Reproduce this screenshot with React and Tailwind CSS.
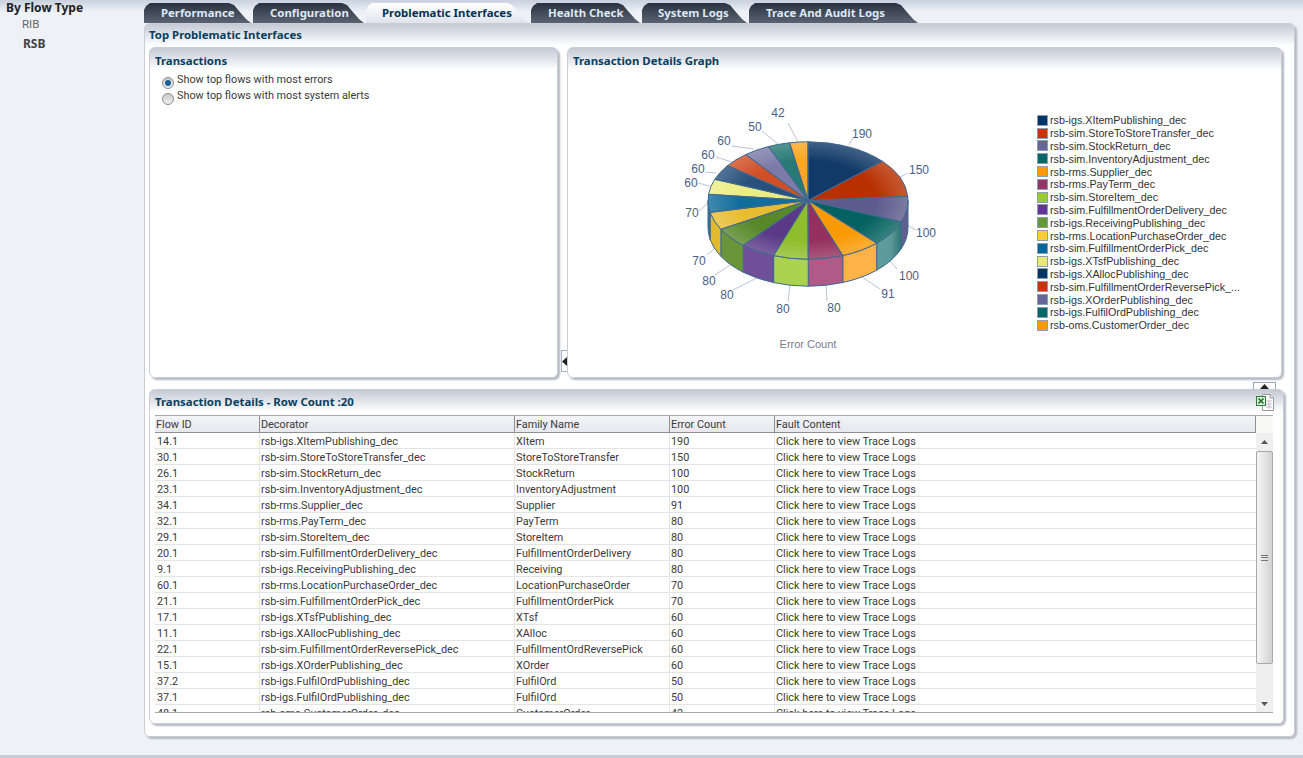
import React from 'react';

const tabs = [
    { label: 'Performance', w: 'w-[109px]', pl: 'pl-[17px]' },
    { label: 'Configuration', w: 'w-[113px]', pl: 'pl-[17px]' },
    { label: 'Problematic Interfaces', w: 'w-[165px]', pl: 'pl-[16px]', active: true },
    { label: 'Health Check', w: 'w-[111px]', pl: 'pl-[17px]' },
    { label: 'System Logs', w: 'w-[107px]', pl: 'pl-[16px]' },
    { label: 'Trace And Audit Logs', w: 'w-[171px]', pl: 'pl-[17px]' },
];

const rows = [
    ['14.1', 'rsb-igs.XItemPublishing_dec', 'XItem', '190'],
    ['30.1', 'rsb-sim.StoreToStoreTransfer_dec', 'StoreToStoreTransfer', '150'],
    ['26.1', 'rsb-sim.StockReturn_dec', 'StockReturn', '100'],
    ['23.1', 'rsb-sim.InventoryAdjustment_dec', 'InventoryAdjustment', '100'],
    ['34.1', 'rsb-rms.Supplier_dec', 'Supplier', '91'],
    ['32.1', 'rsb-rms.PayTerm_dec', 'PayTerm', '80'],
    ['29.1', 'rsb-sim.StoreItem_dec', 'StoreItem', '80'],
    ['20.1', 'rsb-sim.FulfillmentOrderDelivery_dec', 'FulfillmentOrderDelivery', '80'],
    ['9.1', 'rsb-igs.ReceivingPublishing_dec', 'Receiving', '80'],
    ['60.1', 'rsb-rms.LocationPurchaseOrder_dec', 'LocationPurchaseOrder', '70'],
    ['21.1', 'rsb-sim.FulfillmentOrderPick_dec', 'FulfillmentOrderPick', '70'],
    ['17.1', 'rsb-igs.XTsfPublishing_dec', 'XTsf', '60'],
    ['11.1', 'rsb-igs.XAllocPublishing_dec', 'XAlloc', '60'],
    ['22.1', 'rsb-sim.FulfillmentOrderReversePick_dec', 'FulfillmentOrdReversePick', '60'],
    ['15.1', 'rsb-igs.XOrderPublishing_dec', 'XOrder', '60'],
    ['37.2', 'rsb-igs.FulfilOrdPublishing_dec', 'FulfilOrd', '50'],
    ['37.1', 'rsb-igs.FulfilOrdPublishing_dec', 'FulfilOrd', '50'],
    ['48.1', 'rsb-oms.CustomerOrder_dec', 'CustomerOrder', '42'],
];

const slices = [
    { name: 'rsb-igs.XItemPublishing_dec', value: 190, color: '#123a68', side: '#2f5580', swatch: 'bg-[#003366]' },
    { name: 'rsb-sim.StoreToStoreTransfer_dec', value: 150, color: '#b83000', side: '#c8502a', swatch: 'bg-[#cc3300]' },
    { name: 'rsb-sim.StockReturn_dec', value: 100, color: '#5c5b8c', side: '#625f8f', swatch: 'bg-[#666699]' },
    { name: 'rsb-sim.InventoryAdjustment_dec', value: 100, color: '#03625f', side: 'url(#tealSide)', swatch: 'bg-[#006666]' },
    { name: 'rsb-rms.Supplier_dec', value: 91, color: '#fa9a04', side: '#ffb347', swatch: 'bg-[#ff9900]' },
    { name: 'rsb-rms.PayTerm_dec', value: 80, color: '#93305f', side: '#b05a88', swatch: 'bg-[#993366]' },
    { name: 'rsb-sim.StoreItem_dec', value: 80, color: '#8fbe2c', side: '#abd350', swatch: 'bg-[#99cc33]' },
    { name: 'rsb-sim.FulfillmentOrderDelivery_dec', value: 80, color: '#5a3a88', side: '#6f5098', swatch: 'bg-[#663399]' },
    { name: 'rsb-igs.ReceivingPublishing_dec', value: 80, color: '#588828', side: '#6a9538', swatch: 'bg-[#669933]' },
    { name: 'rsb-rms.LocationPurchaseOrder_dec', value: 70, color: '#e8bc30', side: '#e2b92c', swatch: 'bg-[#ffcc33]' },
    { name: 'rsb-sim.FulfillmentOrderPick_dec', value: 70, color: '#126c9c', side: '#2a6f98', swatch: 'bg-[#006699]' },
    { name: 'rsb-igs.XTsfPublishing_dec', value: 60, color: '#ecec84', side: '#ecec88', swatch: 'bg-[#e8e878]' },
    { name: 'rsb-igs.XAllocPublishing_dec', value: 60, color: '#28507c', side: '#2f5580', swatch: 'bg-[#003366]' },
    { name: 'rsb-sim.FulfillmentOrderReversePick_...', value: 60, color: '#d04f26', side: '#c8502a', swatch: 'bg-[#cc3300]' },
    { name: 'rsb-igs.XOrderPublishing_dec', value: 60, color: '#7c7ba8', side: '#625f8f', swatch: 'bg-[#666699]' },
    { name: 'rsb-igs.FulfilOrdPublishing_dec', value: 50, color: '#287a76', side: '#5a9a98', swatch: 'bg-[#006666]' },
    { name: 'rsb-oms.CustomerOrder_dec', value: 42, color: '#ffa622', side: '#ffb347', swatch: 'bg-[#ff9900]' },
];

// label text and leader line, in page coordinates
const labels = [
    ['190', 862, 135, 849, 146, 853, 139],
    ['150', 919, 171, 900, 178, 908, 174],
    ['100', 926, 234, 907, 226, 916, 231],
    ['100', 909, 277, 890, 262, 897, 270],
    ['91', 888, 295, 862, 278, 880, 290],
    ['80', 834, 309, 826, 286, 827, 302],
    ['80', 783, 310, 790, 286, 788, 303],
    ['80', 727, 296, 757, 279, 733, 291],
    ['80', 709, 282, 730, 266, 715, 276],
    ['70', 699, 262, 716, 248, 707, 256],
    ['70', 692, 214, 707, 205, 699, 212],
    ['60', 691, 184, 710, 187, 698, 184],
    ['60', 698, 170, 716, 174, 705, 173],
    ['60', 708, 156, 738, 165, 716, 158],
    ['60', 724, 142, 754, 150, 732, 147],
    ['50', 755, 128, 778, 145, 762, 132],
    ['42', 778, 114, 798, 143, 788, 124],
];

const cx = 808;
const cy = 201.5;
const rx = 100;
const ry = 58.7;
const depth = 27;

function pt(t, dy = 0) {
    const a = (t * Math.PI) / 180;
    return [cx + rx * Math.sin(a), cy - ry * Math.cos(a) + dy];
}

function PieChart() {
    const total = slices.reduce((s, x) => s + x.value, 0);
    let start = 0;
    const parts = slices.map((s) => {
        const end = start + (s.value / total) * 360;
        const p = { ...s, start, end };
        start = end;
        return p;
    });
    const wedge = (p) => {
        const [x1, y1] = pt(p.start);
        const [x2, y2] = pt(p.end);
        const large = p.end - p.start > 180 ? 1 : 0;
        return `M${cx} ${cy}L${x1} ${y1}A${rx} ${ry} 0 ${large} 1 ${x2} ${y2}Z`;
    };

    return (
        <svg width="290" height="265" viewBox="670 95 290 265" className="shrink-0">
            <defs>
                <radialGradient id="rim" gradientUnits="userSpaceOnUse" cx="0" cy="0" r="1" gradientTransform={`translate(${cx} ${cy}) scale(${rx} ${ry})`}>
                    <stop offset="0.68" stopColor="#fff" stopOpacity="0" />
                    <stop offset="1" stopColor="#fff" stopOpacity="0.2" />
                </radialGradient>
                <linearGradient id="tealSide" gradientUnits="userSpaceOnUse" x1="876" y1="0" x2="901" y2="0">
                    <stop offset="0" stopColor="#5f9e9b" />
                    <stop offset="0.6" stopColor="#5a9a98" />
                    <stop offset="1" stopColor="#2c7674" />
                </linearGradient>
            </defs>
            {labels.map(([text, x, y, x1, y1, x2, y2], i) => (
                <line key={i} x1={x1} y1={y1} x2={x2} y2={y2} stroke="#b9c4d6" strokeWidth="1" />
            ))}
            {parts.filter((p) => p.end > 90 && p.start < 270).map((p) => {
                const a = Math.max(p.start, 90);
                const b = Math.min(p.end, 270);
                const [x1, y1] = pt(a);
                const [x2, y2] = pt(b);
                return (
                    <path
                        key={p.name}
                        d={`M${x1} ${y1}A${rx} ${ry} 0 0 1 ${x2} ${y2}L${x2} ${y2 + depth}A${rx} ${ry} 0 0 0 ${x1} ${y1 + depth}Z`}
                        fill={p.side}
                        stroke="#3f6890"
                        strokeWidth="1"
                    />
                );
            })}
            {parts.map((p) => (
                <path key={p.name} d={wedge(p)} fill={p.color} />
            ))}
            <ellipse cx={cx} cy={cy} rx={rx} ry={ry} fill="url(#rim)" />
            {parts.map((p) => (
                <path key={p.name} d={wedge(p)} fill="none" stroke="#3f6890" strokeWidth="1" />
            ))}
            {labels.map(([text, x, y], i) => (
                <text key={i} x={x} y={y + 4} textAnchor="middle" fontFamily="'Liberation Sans', sans-serif" fontSize="12" fill="#4a6088">
                    {text}
                </text>
            ))}
            <text x="808" y="349" textAnchor="middle" fontFamily="'Liberation Sans', sans-serif" fontSize="11" fill="#7d7d8c">
                Error Count
            </text>
        </svg>
    );
}

function Radio({ checked, label }) {
    return (
        <div className="flex h-4 items-center">
            <span className="mt-[5px] flex h-3 w-3 shrink-0 items-center justify-center rounded-full border border-[#8d8d8d] bg-[linear-gradient(#c9c9c9,#f0f0f0)]">
                {checked && <span className="h-[6px] w-[6px] rounded-full bg-[#1f5f96]" />}
            </span>
            <span className="ml-[3px]">{label}</span>
        </div>
    );
}

function ExcelIcon() {
    return (
        <svg width="19" height="19" viewBox="0 0 19 19">
            <path d="M6.5 1.5H14L17.5 5V17.5H6.5Z" fill="#fff" stroke="#9a9a9a" />
            <path d="M14 1.5V5H17.5" fill="#e8e8e8" stroke="#9a9a9a" />
            <path d="M10 8H16M10 11H16M10 14H16M13 8V16" stroke="#c8b8c8" />
            <rect x="0.5" y="3.5" width="9" height="9" fill="#dcefd8" stroke="#2f7d3c" />
            <path d="M2.5 5.5L7.5 10.5M7.5 5.5L2.5 10.5" stroke="#1e6b2c" strokeWidth="1.6" />
        </svg>
    );
}

function Tri({ down, className, fill = '#222' }) {
    return (
        <svg viewBox="0 0 9 5" className={className}>
            <path d={down ? 'M0 0H9L4.5 5Z' : 'M0 5H9L4.5 0Z'} fill={fill} />
        </svg>
    );
}

const panel = 'rounded-[6px] border border-[#c9cdd6] bg-[linear-gradient(#c4c9d5,#ffffff_22px)] shadow-[2px_2px_2px_#b4b8c2]';
const heading = "font-['Noto_Sans',sans-serif] font-bold text-[11.4px] text-[#07405f]";

export default function App() {
    return (
        <div className="flex h-[758px] w-[1303px] overflow-hidden border-b-[3px] border-[#c8ccd6] bg-[linear-gradient(#c9d1df,#eef2f7_12px)] font-['Roboto',sans-serif] text-[10.85px] text-[#3a3a3a]">
            <aside className="w-[144px] shrink-0 pl-[6px] pt-px">
                <div className="h-[14px] font-['Noto_Sans',sans-serif] text-[12px] leading-[14px] font-bold text-[#222]">By Flow Type</div>
                <div className="mt-[1px] h-[16px] pl-[16px] text-[11.5px] leading-[16px] text-[#666]">RIB</div>
                <div className="mt-[4px] pl-[17px] font-['Noto_Sans',sans-serif] text-[12px] leading-[16px] font-bold text-[#444]">RSB</div>
            </aside>

            <main className="w-[1151px] shrink-0 pt-[3px]">
                <div className="flex h-[20px]">
                    {tabs.map((t) => (
                        <div
                            key={t.label}
                            className={`flex shrink-0 items-center ${t.w} ${t.pl} font-['Noto_Sans',sans-serif] text-[11.4px] font-bold [clip-path:polygon(0_100%,0_7px,2px_3px,6px_0,calc(100%-24px)_0,calc(100%-19px)_2px,calc(100%-14px)_8px,calc(100%-7px)_16px,calc(100%-2px)_20px,calc(100%-4px)_100%)] ${t.active ? 'bg-[linear-gradient(#ffffff,#f2f4f8_45%,#dfe3ec)] text-[#06324f]' : 'bg-[linear-gradient(#2a3340,#5a6372)] text-[#dfe9f5]'}`}
                        >
                            {t.label}
                        </div>
                    ))}
                </div>

                <div className={`${panel} h-[714px] px-[4px]`}>
                    <div className={`${heading} flex h-[23px] items-center pb-px`}>Top Problematic Interfaces</div>

                    <div className="flex h-[331px]">
                        <section className={`${panel} w-[409px] px-[5px]`}>
                            <div className={`${heading} flex h-[25px] items-center`}>Transactions</div>
                            <div className="-mt-[1px] pl-[7px]">
                                <Radio checked label="Show top flows with most errors" />
                                <Radio label="Show top flows with most system alerts" />
                            </div>
                        </section>

                        <div className="flex w-[9px] shrink-0 items-end justify-start pb-[6px] pl-[3px]">
                            <div className="flex h-[22px] w-[6px] items-center justify-center border-y border-l border-[#aab2c0] bg-white">
                                <svg width="5" height="9" viewBox="0 0 5 9"><path d="M0 4.5L5 0V9Z" fill="#222" /></svg>
                            </div>
                        </div>

                        <section className={`${panel} w-[715px] pl-[5px]`}>
                            <div className={`${heading} flex h-[25px] items-center`}>Transaction Details Graph</div>
                            <div className="flex">
                                <div className="ml-[97px] mt-[21px]"><PieChart /></div>
                                <div className="ml-[77px] mt-[41px] font-['Liberation_Sans',sans-serif] text-[10.75px] text-[#333]">
                                    {slices.map((s) => (
                                        <div key={s.name} className="flex h-[12.8px] items-center whitespace-nowrap">
                                            <span className={`h-[11px] w-[11px] shrink-0 border border-[#8d9db3] ${s.swatch}`} />
                                            <span className="ml-[2px]">{s.name}</span>
                                        </div>
                                    ))}
                                </div>
                            </div>
                        </section>
                    </div>

                    <div className="flex h-[11px] justify-end pr-[14px] pt-[4px]">
                        <div className="flex h-[7px] w-[23px] items-center justify-center border border-b-0 border-[#9aa3b2] bg-white">
                            <Tri className="h-[5px] w-[9px]" />
                        </div>
                    </div>

                    <section className={`${panel} h-[335px] w-[1135px] pl-[5px]`}>
                        <div className="flex h-[25px] items-center justify-between pr-[8px]">
                            <span className={`${heading} pb-[2px]`}>Transaction Details - Row Count :20</span>
                            <ExcelIcon />
                        </div>
                        <div className="w-[1118px] border-y border-[#a9a9a9]">
                            <div className="flex h-[17px] bg-[#f9f9f5]">
                                <div className="flex h-[17px] w-[1101px] shrink-0 border-r border-b border-[#8f8f8f] bg-[linear-gradient(#f3f4f7,#e6e8ee)] leading-[18px]">
                                    <div className="w-[105px] shrink-0 border-r border-[#8f8f8f] pl-px">Flow ID</div>
                                    <div className="w-[255px] shrink-0 border-r border-[#8f8f8f] pl-px">Decorator</div>
                                    <div className="w-[155px] shrink-0 border-r border-[#8f8f8f] pl-px">Family Name</div>
                                    <div className="w-[105px] shrink-0 border-r border-[#8f8f8f] pl-px">Error Count</div>
                                    <div className="pl-px">Fault Content</div>
                                </div>
                            </div>
                            <div className="flex h-[279px] overflow-hidden">
                                <div className="w-[1101px] shrink-0">
                                    {rows.map((r) => (
                                        <div key={r[0] + r[2]} className="flex h-[16px] shrink-0 border-b border-[#e4e4e4] leading-[17px]">
                                            <div className="w-[105px] shrink-0 border-r border-[#e4e4e4] pl-[2px]">{r[0]}</div>
                                            <div className="w-[255px] shrink-0 border-r border-[#e4e4e4] pl-[1px]">{r[1]}</div>
                                            <div className="w-[155px] shrink-0 border-r border-[#e4e4e4] pl-[1px]">{r[2]}</div>
                                            <div className="w-[105px] shrink-0 border-r border-[#e4e4e4] pl-[1px]">{r[3]}</div>
                                            <div className="pl-[1px]">Click here to view Trace Logs</div>
                                        </div>
                                    ))}
                                </div>
                                <div className="flex w-[17px] shrink-0 flex-col bg-[#efefef]">
                                    <div className="flex h-[18px] items-center justify-center"><Tri className="h-[4px] w-[7px]" fill="#555" /></div>
                                    <div className="flex h-[213px] items-center justify-center rounded-[2px] border border-[#a8a8a8] bg-[linear-gradient(90deg,#f6f6f6,#d2d2d2)]">
                                        <div className="h-[6px] w-[7px] border-y border-[#777] bg-[linear-gradient(#777,#777)] bg-[length:100%_1px] bg-center bg-no-repeat" />
                                    </div>
                                    <div className="flex flex-1 items-end justify-center pb-[6px]"><Tri down className="h-[4px] w-[7px]" fill="#555" /></div>
                                </div>
                            </div>
                        </div>
                    </section>
                </div>
            </main>
        </div>
    );
}
